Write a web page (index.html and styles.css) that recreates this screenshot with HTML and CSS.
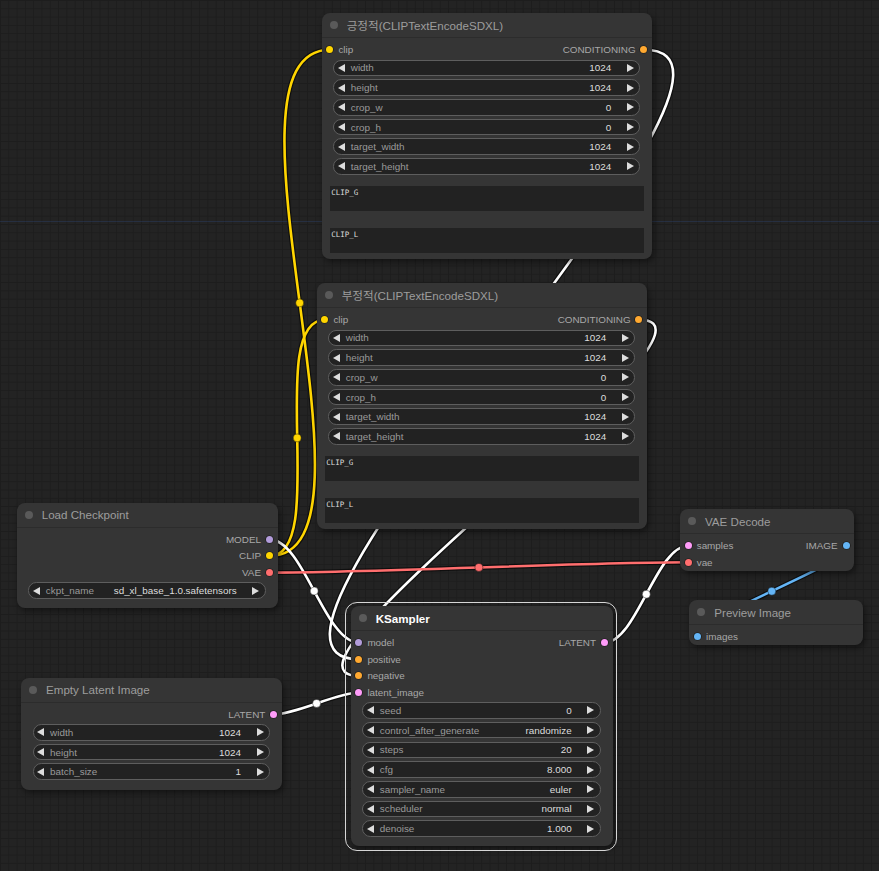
FILE: index.html
```html
<!DOCTYPE html>
<html lang="ko">
<head>
<meta charset="utf-8">
<title>ComfyUI</title>
<link rel="stylesheet" href="styles.css">
</head>
<body>
<div class="canvas">
  <svg class="links" width="879" height="871" viewBox="0 0 879 871">
    <line class="axis" x1="0" y1="221.5" x2="879" y2="221.5"/>
    <g class="shadow">
      <path d="M269.4,556 C396.9,556 202.5,49.7 330,49.7"/>
      <path d="M269.4,556 C330.1,556 264.3,319.7 325,319.7"/>
      <path d="M269.4,539.4 C303.6,539.4 324.8,642.7 359,642.7"/>
      <path d="M269.4,572.6 C374.2,572.6 583.5,562.3 688.3,562.3"/>
      <path d="M644,49.7 C812.2,49.7 190.8,659.3 359,659.3"/>
      <path d="M639,319.7 C752.3,319.7 245.7,675.9 359,675.9"/>
      <path d="M274.3,714.3 C296.2,714.3 337.1,692.5 359,692.5"/>
      <path d="M604.4,642.7 C636.5,642.7 656.2,545.7 688.3,545.7"/>
      <path d="M846,545.7 C889.5,545.7 654.1,636.7 697.6,636.7"/>
    </g>
    <g class="lk yellow">
      <path d="M269.4,556 C396.9,556 202.5,49.7 330,49.7"/>
      <path d="M269.4,556 C330.1,556 264.3,319.7 325,319.7"/>
    </g>
    <g class="lk white">
      <path d="M269.4,539.4 C303.6,539.4 324.8,642.7 359,642.7"/>
      <path d="M644,49.7 C812.2,49.7 190.8,659.3 359,659.3"/>
      <path d="M639,319.7 C752.3,319.7 245.7,675.9 359,675.9"/>
      <path d="M274.3,714.3 C296.2,714.3 337.1,692.5 359,692.5"/>
      <path d="M604.4,642.7 C636.5,642.7 656.2,545.7 688.3,545.7"/>
    </g>
    <g class="lk red">
      <path d="M269.4,572.6 C374.2,572.6 583.5,562.3 688.3,562.3"/>
    </g>
    <g class="lk blue">
      <path d="M846,545.7 C889.5,545.7 654.1,636.7 697.6,636.7"/>
    </g>
    <g class="markers">
      <circle class="m-yellow" cx="299.7" cy="302.9" r="4"/>
      <circle class="m-yellow" cx="297.2" cy="437.9" r="4"/>
      <circle class="m-white" cx="314.2" cy="591" r="4"/>
      <circle class="m-red" cx="478.9" cy="567.4" r="4"/>
      <circle class="m-white" cx="316.6" cy="703.4" r="4"/>
      <circle class="m-white" cx="646.3" cy="594.2" r="4"/>
      <circle class="m-blue" cx="771.8" cy="591.2" r="4"/>
    </g>
  </svg>

  <!-- 긍정적 -->
  <div class="node n-pos">
    <div class="title"><span class="tdot"></span><span class="ttext">긍정적(CLIPTextEncodeSDXL)</span></div>
    <div class="slots">
      <div class="slot-row"><div class="in"><span class="dot c-clip"></span>clip</div><div class="out">CONDITIONING<span class="dot c-cond"></span></div></div>
    </div>
    <div class="widgets tight">
      <div class="widget"><span class="arr l"></span><span class="wl">width</span><span class="wv">1024</span><span class="arr r"></span></div>
      <div class="widget"><span class="arr l"></span><span class="wl">height</span><span class="wv">1024</span><span class="arr r"></span></div>
      <div class="widget"><span class="arr l"></span><span class="wl">crop_w</span><span class="wv">0</span><span class="arr r"></span></div>
      <div class="widget"><span class="arr l"></span><span class="wl">crop_h</span><span class="wv">0</span><span class="arr r"></span></div>
      <div class="widget"><span class="arr l"></span><span class="wl">target_width</span><span class="wv">1024</span><span class="arr r"></span></div>
      <div class="widget"><span class="arr l"></span><span class="wl">target_height</span><span class="wv">1024</span><span class="arr r"></span></div>
    </div>
    <div class="texts">
      <div class="tarea">CLIP_G</div>
      <div class="tarea">CLIP_L</div>
    </div>
  </div>

  <!-- 부정적 -->
  <div class="node n-neg">
    <div class="title"><span class="tdot"></span><span class="ttext">부정적(CLIPTextEncodeSDXL)</span></div>
    <div class="slots">
      <div class="slot-row"><div class="in"><span class="dot c-clip"></span>clip</div><div class="out">CONDITIONING<span class="dot c-cond"></span></div></div>
    </div>
    <div class="widgets tight">
      <div class="widget"><span class="arr l"></span><span class="wl">width</span><span class="wv">1024</span><span class="arr r"></span></div>
      <div class="widget"><span class="arr l"></span><span class="wl">height</span><span class="wv">1024</span><span class="arr r"></span></div>
      <div class="widget"><span class="arr l"></span><span class="wl">crop_w</span><span class="wv">0</span><span class="arr r"></span></div>
      <div class="widget"><span class="arr l"></span><span class="wl">crop_h</span><span class="wv">0</span><span class="arr r"></span></div>
      <div class="widget"><span class="arr l"></span><span class="wl">target_width</span><span class="wv">1024</span><span class="arr r"></span></div>
      <div class="widget"><span class="arr l"></span><span class="wl">target_height</span><span class="wv">1024</span><span class="arr r"></span></div>
    </div>
    <div class="texts">
      <div class="tarea">CLIP_G</div>
      <div class="tarea">CLIP_L</div>
    </div>
  </div>

  <!-- Load Checkpoint -->
  <div class="node n-ckpt">
    <div class="title"><span class="tdot"></span><span class="ttext">Load Checkpoint</span></div>
    <div class="slots">
      <div class="slot-row"><div class="in"></div><div class="out">MODEL<span class="dot c-model"></span></div></div>
      <div class="slot-row"><div class="in"></div><div class="out">CLIP<span class="dot c-clip"></span></div></div>
      <div class="slot-row"><div class="in"></div><div class="out">VAE<span class="dot c-vae"></span></div></div>
    </div>
    <div class="widgets">
      <div class="widget"><span class="arr l"></span><span class="wl">ckpt_name</span><span class="wv">sd_xl_base_1.0.safetensors</span><span class="arr r"></span></div>
    </div>
  </div>

  <!-- Empty Latent Image -->
  <div class="node n-latent">
    <div class="title"><span class="tdot"></span><span class="ttext">Empty Latent Image</span></div>
    <div class="slots">
      <div class="slot-row"><div class="in"></div><div class="out">LATENT<span class="dot c-latent"></span></div></div>
    </div>
    <div class="widgets">
      <div class="widget"><span class="arr l"></span><span class="wl">width</span><span class="wv">1024</span><span class="arr r"></span></div>
      <div class="widget"><span class="arr l"></span><span class="wl">height</span><span class="wv">1024</span><span class="arr r"></span></div>
      <div class="widget"><span class="arr l"></span><span class="wl">batch_size</span><span class="wv">1</span><span class="arr r"></span></div>
    </div>
  </div>

  <!-- KSampler -->
  <div class="node n-ksampler selected">
    <div class="title"><span class="tdot"></span><span class="ttext strong">KSampler</span></div>
    <div class="slots">
      <div class="slot-row"><div class="in"><span class="dot c-model"></span>model</div><div class="out">LATENT<span class="dot c-latent"></span></div></div>
      <div class="slot-row"><div class="in"><span class="dot c-cond"></span>positive</div><div class="out"></div></div>
      <div class="slot-row"><div class="in"><span class="dot c-cond"></span>negative</div><div class="out"></div></div>
      <div class="slot-row"><div class="in"><span class="dot c-latent"></span>latent_image</div><div class="out"></div></div>
    </div>
    <div class="widgets">
      <div class="widget"><span class="arr l"></span><span class="wl">seed</span><span class="wv">0</span><span class="arr r"></span></div>
      <div class="widget"><span class="arr l"></span><span class="wl">control_after_generate</span><span class="wv">randomize</span><span class="arr r"></span></div>
      <div class="widget"><span class="arr l"></span><span class="wl">steps</span><span class="wv">20</span><span class="arr r"></span></div>
      <div class="widget"><span class="arr l"></span><span class="wl">cfg</span><span class="wv">8.000</span><span class="arr r"></span></div>
      <div class="widget"><span class="arr l"></span><span class="wl">sampler_name</span><span class="wv">euler</span><span class="arr r"></span></div>
      <div class="widget"><span class="arr l"></span><span class="wl">scheduler</span><span class="wv">normal</span><span class="arr r"></span></div>
      <div class="widget"><span class="arr l"></span><span class="wl">denoise</span><span class="wv">1.000</span><span class="arr r"></span></div>
    </div>
  </div>

  <!-- VAE Decode -->
  <div class="node n-vae">
    <div class="title"><span class="tdot"></span><span class="ttext">VAE Decode</span></div>
    <div class="slots">
      <div class="slot-row"><div class="in"><span class="dot c-latent"></span>samples</div><div class="out">IMAGE<span class="dot c-image"></span></div></div>
      <div class="slot-row"><div class="in"><span class="dot c-vae"></span>vae</div><div class="out"></div></div>
    </div>
  </div>

  <!-- Preview Image -->
  <div class="node n-preview">
    <div class="title"><span class="tdot"></span><span class="ttext">Preview Image</span></div>
    <div class="slots">
      <div class="slot-row"><div class="in"><span class="dot c-image"></span>images</div><div class="out"></div></div>
    </div>
  </div>
</div>
</body>
</html>
```

FILE: styles.css
```css
* { box-sizing: border-box; }

html, body {
  margin: 0;
  padding: 0;
  background: #222222;
}

.canvas {
  position: relative;
  width: 879px;
  height: 871px;
  overflow: hidden;
  background-color: #232323;
  background-image:
    linear-gradient(to bottom, #1d1d1d 1px, transparent 1px),
    linear-gradient(to right, #1d1d1d 1px, transparent 1px);
  background-size: 8.3px 8.3px;
  font-family: "Liberation Sans", Arial, "Noto Sans CJK KR", sans-serif;
}

/* ---------- links ---------- */
.links {
  position: absolute;
  left: 0;
  top: 0;
  z-index: 0;
}
.links path { fill: none; }
.axis { stroke: rgba(45, 75, 135, 0.3); stroke-width: 1; }
.shadow path { stroke: rgba(0, 0, 0, 0.55); stroke-width: 5; }
.lk path { stroke-width: 2.6; }
.yellow path { stroke: #ffd500; }
.white path { stroke: #ffffff; }
.red path { stroke: #ff6e6e; }
.blue path { stroke: #64b5f6; }
.markers circle { stroke: rgba(0, 0, 0, 0.4); stroke-width: 1; }
.m-yellow { fill: #ffd500; }
.m-white { fill: #ffffff; }
.m-red { fill: #ff6e6e; }
.m-blue { fill: #64b5f6; }

/* ---------- nodes ---------- */
.node {
  position: absolute;
  z-index: 1;
  display: flex;
  flex-direction: column;
  background: #353535;
  border-radius: 8px;
  box-shadow: 2px 3px 6px rgba(0, 0, 0, 0.45);
}

.n-pos { left: 321.7px; top: 13px; width: 330.6px; }
.n-neg { left: 316.7px; top: 283px; width: 330.6px; }
.n-ckpt { left: 16.7px; top: 502.7px; width: 261px; }
.n-latent { left: 21px; top: 677.7px; width: 261px; }
.n-ksampler { left: 350.7px; top: 606px; width: 262px; }
.n-vae { left: 680px; top: 509px; width: 174.3px; }
.n-preview { left: 689.3px; top: 600px; width: 174px; }

.selected::after {
  content: "";
  position: absolute;
  left: -5.5px;
  top: -4.5px;
  right: -4.5px;
  bottom: -4.5px;
  border: 1.5px solid #d6d6d6;
  border-radius: 12px;
  pointer-events: none;
}

.title {
  height: 25px;
  display: flex;
  align-items: center;
  padding-left: 8px;
  border-bottom: 1px solid #2c2c2c;
  border-radius: 8px 8px 0 0;
}
.tdot {
  width: 8px;
  height: 8px;
  border-radius: 50%;
  background: #5a5a5a;
  flex: none;
}
.ttext {
  margin-left: 9px;
  font-size: 11.6px;
  color: #9d9d9d;
  white-space: nowrap;
  font-family: "Liberation Sans", Arial, "Noto Sans CJK KR", sans-serif;
}
.ttext.strong {
  color: #ffffff;
  font-weight: bold;
}

/* ---------- slots ---------- */
.slots {
  padding-top: 3.4px;
  display: flex;
  flex-direction: column;
}
.slot-row {
  height: 16.6px;
  display: flex;
  justify-content: space-between;
  align-items: center;
  font-size: 9.9px;
  color: #a8a8a8;
}
.in, .out {
  display: flex;
  align-items: center;
  white-space: nowrap;
}
.in { padding-left: 4.8px; }
.out { padding-right: 4.8px; }
.in .dot { margin-right: 4.9px; }
.out .dot { margin-left: 4.9px; }

.dot {
  width: 7px;
  height: 7px;
  border-radius: 50%;
  flex: none;
  box-shadow: 0 0 0 0.6px rgba(0, 0, 0, 0.55);
}
.c-clip { background: #ffd500; }
.c-cond { background: #ffa931; }
.c-model { background: #b39ddb; }
.c-vae { background: #ff6e6e; }
.c-latent { background: #ff9cf9; }
.c-image { background: #64b5f6; }

/* ---------- widgets ---------- */
.widgets {
  display: flex;
  flex-direction: column;
  gap: 3.1px;
  padding: 1.4px 12px 9.6px 11.6px;
}
.widgets.tight { padding-bottom: 0; padding-top: 1.7px; }

.widget {
  height: 16.6px;
  border-radius: 8.3px;
  background: #222222;
  border: 1px solid #5e5e5e;
  display: flex;
  align-items: center;
  padding: 0 5.5px 0 3.8px;
  font-size: 9.9px;
  white-space: nowrap;
}
.arr {
  width: 0;
  height: 0;
  border-top: 4px solid transparent;
  border-bottom: 4px solid transparent;
  flex: none;
}
.arr.l { border-right: 7px solid #dddddd; }
.arr.r { border-left: 7px solid #dddddd; margin-left: 15.5px; }
.wl {
  margin-left: 5.7px;
  color: #9a9a9a;
  flex: 1;
}
.wv {
  color: #dddddd;
  text-align: right;
}

/* ---------- text areas ---------- */
.texts {
  display: flex;
  flex-direction: column;
  gap: 17.3px;
  padding: 11.4px 8px 5.5px 8px;
}
.tarea {
  height: 25px;
  background: #222222;
  color: #dddddd;
  font-family: "DejaVu Sans Mono", "Liberation Mono", monospace;
  font-size: 7.5px;
  line-height: 9px;
  padding: 1.5px 1.5px;
}
```
